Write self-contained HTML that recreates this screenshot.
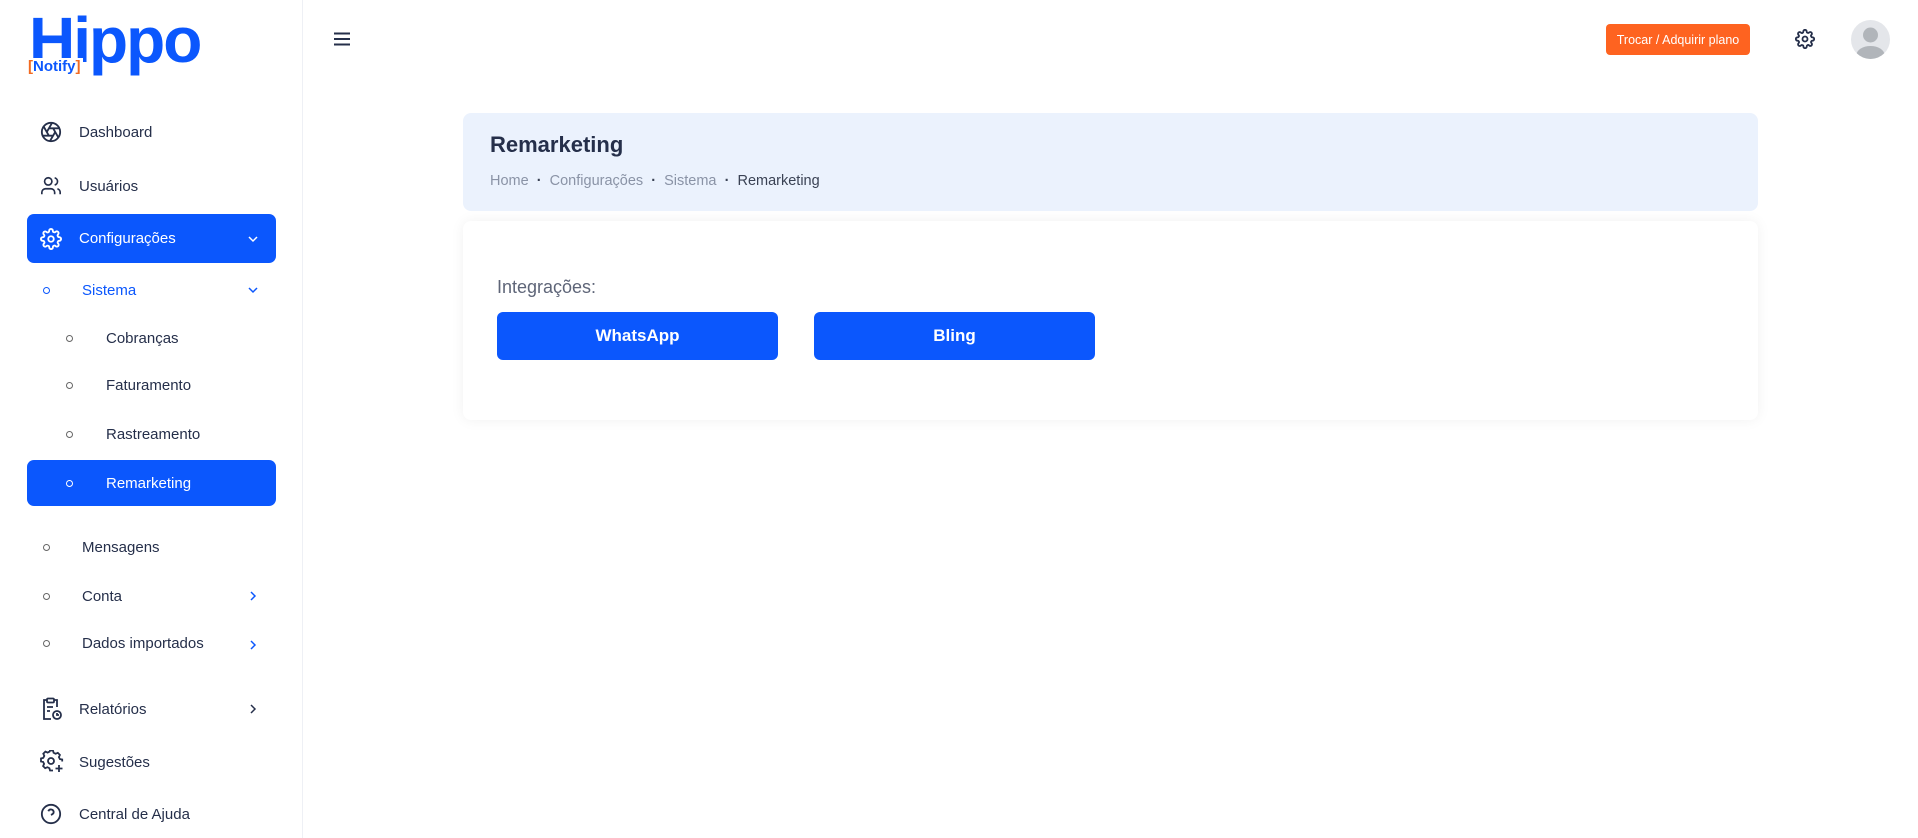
<!DOCTYPE html>
<html><head><meta charset="utf-8"><style>
*{box-sizing:border-box;margin:0;padding:0}
body{width:1918px;height:838px;overflow:hidden;background:#fff;font-family:"Liberation Sans",sans-serif;color:#252f4a;position:relative}
.side{position:absolute;left:0;top:0;width:303px;height:838px;border-right:1px solid #eef0f5;background:#fff}
.item{position:absolute;left:27px;width:249px;height:46px;display:flex;align-items:center;font-size:15px;color:#252f4a}
.item svg{position:absolute;left:13px}
.item .t{position:absolute;left:52px}
.active{background:#0b57fd;color:#fff;border-radius:7px}
.dot{position:absolute;width:7px;height:7px;border:1.3px solid #666;border-radius:50%}
.chev{position:absolute;right:16px}
.abs{position:absolute}
</style></head><body>
<div class="side">
  <div class="abs" style="left:29px;top:8px;font-size:64px;font-weight:bold;color:#0b57fd;letter-spacing:-2px;line-height:64px">Hippo</div>
  <div class="abs" style="left:28px;top:58px;font-size:15px;font-weight:bold;color:#0b57fd;background:#fff;padding-right:2px"><span style="color:#f26a21">[</span>Notify<span style="color:#f26a21">]</span></div>

  <div class="item" style="top:109px"><svg width="22" height="22" viewBox="0 0 24 24" fill="none" stroke="#252f4a" stroke-width="2"><circle cx="12" cy="12" r="10"/><path d="M14.3 8l5.7 9.9M9.7 8h11.5M7.4 12l5.8-10M9.7 16L4 6.1M14.3 16H2.8M16.6 12l-5.8 10"/></svg><span class="t">Dashboard</span></div>
  <div class="item" style="top:163px"><svg width="22" height="22" viewBox="0 0 24 24" fill="none" stroke="#252f4a" stroke-width="1.8"><circle cx="9" cy="7" r="4"/><path d="M2 21v-2a4 4 0 014-4h6a4 4 0 014 4v2M16 3.1a4 4 0 010 7.8M22 21v-2a4 4 0 00-3-3.9"/></svg><span class="t">Usuários</span></div>
  <div class="item active" style="top:214px;height:49px"><svg width="22" height="22" viewBox="0 0 24 24" fill="none" stroke="#fff" stroke-width="2"><circle cx="12" cy="12" r="3"/><path d="M19.4 15a1.65 1.65 0 00.33 1.820l.06.06a2 2 0 11-2.83 2.83l-.06-.06a1.65 1.65 0 00-1.82-.33 1.65 1.65 0 00-1 1.51V21a2 2 0 11-4 0v-.09A1.65 1.65 0 009 19.4a1.650 1.65 0 00-1.82.33l-.06.06a2 2 0 11-2.83-2.83l.06-.06A1.65 1.65 0 004.68 15a1.65 1.65 0 00-1.51-1H3a2 2 0 110-4h.09A1.65 1.65 0 004.6 9a1.65 1.65 0 00-.33-1.82l-.06-.06a2 2 0 112.83-2.83l.06.06A1.65 1.65 0 009 4.68a1.65 1.65 0 001-1.51V3a2 2 0 114 0v.09a1.65 1.65 0 001 1.51 1.65 1.65 0 001.82-.33l.06-.06a2 2 0 112.83 2.83l-.06.06A1.65 1.65 0 0019.4 9a1.65 1.65 0 001.51 1H21a2 2 0 110 4h-.09a1.65 1.65 0 00-1.51 1z"/></svg><span class="t">Configurações</span><svg class="chev" style="left:auto" width="14" height="14" viewBox="0 0 14 14" fill="none" stroke="#fff" stroke-width="1.5"><path d="M3 5l4 4 4-4"/></svg></div>

  <div class="item" style="top:267px;color:#0b57fd"><span class="dot" style="left:16px;border-color:#0b57fd"></span><span class="t" style="left:55px">Sistema</span><svg class="chev" style="left:auto" width="14" height="14" viewBox="0 0 14 14" fill="none" stroke="#0b57fd" stroke-width="1.5"><path d="M3 5l4 4 4-4"/></svg></div>
  <div class="item" style="top:315px"><span class="dot" style="left:39px"></span><span class="t" style="left:79px">Cobranças</span></div>
  <div class="item" style="top:362px"><span class="dot" style="left:39px"></span><span class="t" style="left:79px">Faturamento</span></div>
  <div class="item" style="top:411px"><span class="dot" style="left:39px"></span><span class="t" style="left:79px">Rastreamento</span></div>
  <div class="item active" style="top:460px"><span class="dot" style="left:39px;border-color:#fff"></span><span class="t" style="left:79px">Remarketing</span></div>
  <div class="item" style="top:524px"><span class="dot" style="left:16px"></span><span class="t" style="left:55px">Mensagens</span></div>
  <div class="item" style="top:573px"><span class="dot" style="left:16px"></span><span class="t" style="left:55px">Conta</span><svg class="chev" style="left:auto" width="14" height="14" viewBox="0 0 14 14" fill="none" stroke="#0b57fd" stroke-width="1.5"><path d="M5 3l4 4-4 4"/></svg></div>
  <div class="item" style="top:620px"><span class="dot" style="left:16px"></span><span class="t" style="left:55px">Dados importados</span><svg class="chev" style="left:auto;top:18px" width="14" height="14" viewBox="0 0 14 14" fill="none" stroke="#0b57fd" stroke-width="1.5"><path d="M5 3l4 4-4 4"/></svg></div>
  <div class="item" style="top:686px"><svg width="22" height="24" viewBox="0 0 22 24" fill="none" stroke="#252f4a" stroke-width="1.8"><path d="M7 3H4v19h7M14 3h3v7"/><rect x="7" y="1.5" width="7" height="4" rx="1"/><path d="M7 10h6M7 14h3"/><circle cx="17" cy="18" r="4"/><path d="M17 16v2h2"/></svg><span class="t">Relatórios</span><svg class="chev" style="left:auto" width="14" height="14" viewBox="0 0 14 14" fill="none" stroke="#252f4a" stroke-width="1.5"><path d="M5 3l4 4-4 4"/></svg></div>
  <div class="item" style="top:739px"><svg width="24" height="24" viewBox="0 0 24 24" fill="none" stroke="#252f4a" stroke-width="1.8"><circle cx="11" cy="11" r="3"/><path d="M13 20.5h-3l-.6-2.3-2 -1-2.2 1-2.1-2.1 1-2.2-1-2L1 11.5v-3l2.3-.6 1-2-1-2.2L5.4 1.6l2.2 1 2-1L10 .5h3l.6 2.3 2 1 2.2-1 2.1 2.1-1 2.2 1 2 2.3.4v2"/><path d="M19 15v7M15.5 18.5h7"/></svg><span class="t">Sugestões</span></div>
  <div class="item" style="top:791px"><svg width="22" height="22" viewBox="0 0 24 24" fill="none" stroke="#252f4a" stroke-width="2"><circle cx="12" cy="12" r="10"/><path d="M9.1 9a3 3 0 015.8 1c0 2-3 3-3 3M12 17h.01"/></svg><span class="t">Central de Ajuda</span></div>
</div>

<svg class="abs" style="left:333px;top:30px" width="18" height="18" viewBox="0 0 18 18" stroke="#252f4a" stroke-width="2"><path d="M1 3.5h16M1 9h16M1 14.5h16"/></svg>

<div class="abs" style="left:1606px;top:24px;width:144px;height:31px;background:#fe6320;border-radius:4px;color:#fff;font-size:12.5px;display:flex;align-items:center;justify-content:center">Trocar / Adquirir plano</div>
<svg class="abs" style="left:1795px;top:29px" width="20" height="20" viewBox="0 0 24 24" fill="none" stroke="#252f4a" stroke-width="2.2"><circle cx="12" cy="12" r="3"/><path d="M19.4 15a1.65 1.65 0 00.33 1.82l.06.06a2 2 0 11-2.83 2.830l-.06-.06a1.65 1.65 0 00-1.82-.33 1.65 1.65 0 00-1 1.51V21a2 2 0 11-4 0v-.09A1.65 1.65 0 009 19.4a1.65 1.65 0 00-1.82.33l-.06.06a2 2 0 11-2.83-2.83l.06-.06A1.65 1.65 0 004.68 15a1.65 1.65 0 00-1.51-1H3a2 2 0 110-4h.09A1.65 1.65 0 004.6 9a1.65 1.65 0 00-.33-1.82l-.06-.06a2 2 0 112.83-2.83l.06.06A1.65 1.65 0 009 4.68a1.65 1.65 0 001-1.51V3a2 2 0 114 0v.09a1.65 1.65 0 001 1.51 1.65 1.65 0 001.82-.33l.06-.06a2 2 0 112.83 2.83l-.06.06A1.65 1.65 0 0019.4 9a1.65 1.65 0 001.51 1H21a2 2 0 110 4h-.09a1.65 1.65 0 00-1.51 1z"/></svg>
<svg class="abs" style="left:1851px;top:20px" width="39" height="39" viewBox="0 0 39 39"><clipPath id="c"><circle cx="19.5" cy="19.5" r="19.5"/></clipPath><circle cx="19.5" cy="19.5" r="19.5" fill="#e4e6ea"/><g clip-path="url(#c)" fill="#b1b5ba"><circle cx="19.5" cy="15" r="7.5"/><ellipse cx="19.5" cy="35" rx="14" ry="9"/></g></svg>

<div class="abs" style="left:463px;top:113px;width:1295px;height:98px;background:#ebf2fd;border-radius:8px"></div>
<div class="abs" style="left:490px;top:132px;font-size:22px;font-weight:bold;color:#252f4a">Remarketing</div>
<div class="abs" style="left:490px;top:173px;font-size:14.5px;color:#8a93a6">Home &nbsp;<b style="color:#3a4254">·</b>&nbsp; Configurações &nbsp;<b style="color:#3a4254">·</b>&nbsp; Sistema &nbsp;<b style="color:#3a4254">·</b>&nbsp; <span style="color:#3a4254">Remarketing</span></div>

<div class="abs" style="left:463px;top:221px;width:1295px;height:199px;background:#fff;border-radius:8px;box-shadow:0 0 14px rgba(0,0,0,0.06)"></div>
<div class="abs" style="left:497px;top:277px;font-size:18px;color:#5e6578">Integrações:</div>
<div class="abs" style="left:497px;top:312px;width:281px;height:48px;background:#0b57fd;border-radius:6px;color:#fff;font-weight:bold;font-size:17px;display:flex;align-items:center;justify-content:center">WhatsApp</div>
<div class="abs" style="left:814px;top:312px;width:281px;height:48px;background:#0b57fd;border-radius:6px;color:#fff;font-weight:bold;font-size:17px;display:flex;align-items:center;justify-content:center">Bling</div>
</body></html>
